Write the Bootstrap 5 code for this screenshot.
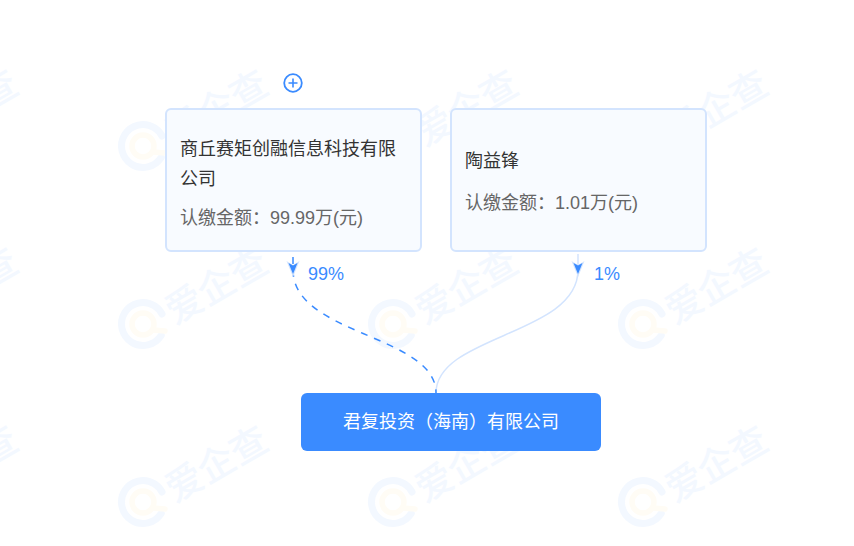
<!DOCTYPE html>
<html lang="zh">
<head>
<meta charset="utf-8">
<link href="https://cdn.jsdelivr.net/npm/bootstrap@5.3.0/dist/css/bootstrap.min.css" rel="stylesheet">
<style>
html,body{height:100%;margin:0;background:#fff;overflow:hidden}
body{font-family:"Liberation Sans","Noto Sans CJK SC",sans-serif}
.canvas-wrap{position:relative;width:854px;height:546px;overflow:hidden}
.wm-layer,.edge-layer{position:absolute;left:0;top:0;width:854px;height:546px}
.wm-word{font-family:"Noto Sans CJK SC",sans-serif;font-size:37px;font-weight:500;fill:#f3f8ff}
.tree{position:relative;padding-top:108px;width:854px}
.holder-row{gap:28px;padding-left:165px}
.holder-box{width:257px;height:144px;background:#f8fbff;border:2px solid #d3e4fe;border-radius:6px;padding:0 13px;color:#333;font-size:18px;line-height:30px}
.holder-long{padding-top:6px}
.holder-long .holder-name{margin-bottom:9px}
.holder-short{padding-top:3px}
.holder-short .holder-name{margin-bottom:12px}
.holder-money{color:#666}
.target-box{width:300px;height:58px;margin:141px 0 0 301px;background:#3a8bff;border-radius:6px;color:#fff;font-size:18px}
.pct{position:absolute;top:264px;color:#3a8bff;font-size:18px;line-height:20px}
.pct-a{left:308px}
.pct-b{left:594px}
.plus-btn{position:absolute;left:283px;top:73px;width:20px;height:20px}
</style>
</head>
<body>
<div class="canvas-wrap">
  <svg class="wm-layer" aria-hidden="true">
    <defs>
      <g id="wm">
        <circle cx="143" cy="146" r="21.5" fill="none" stroke="#f3f8ff" stroke-width="7" stroke-dasharray="112 23" stroke-linecap="round" transform="rotate(32 143 146)"/>
        <circle cx="143" cy="146" r="11" fill="none" stroke="#fffcf5" stroke-width="5.5"/>
        <path d="M153 152l12 1" stroke="#fffcf5" stroke-width="5.5" stroke-linecap="round"/>
        <text class="wm-word" x="175" y="147" transform="rotate(-30 175 147)" textLength="111">爱企查</text>
      </g>
    </defs>
    <use href="#wm" x="-250"/><use href="#wm"/><use href="#wm" x="250"/><use href="#wm" x="500"/>
    <use href="#wm" x="-250" y="178"/><use href="#wm" y="178"/><use href="#wm" x="250" y="178"/><use href="#wm" x="500" y="178"/>
    <use href="#wm" x="-250" y="356"/><use href="#wm" y="356"/><use href="#wm" x="250" y="356"/><use href="#wm" x="500" y="356"/>
  </svg>
  <div class="tree">
    <div class="holder-row d-flex">
      <div class="holder-box holder-long d-flex flex-column justify-content-center">
        <div class="holder-name">商丘赛矩创融信息科技有限公司</div>
        <div class="holder-money">认缴金额&#xFF1A;99.99万(元)</div>
      </div>
      <div class="holder-box holder-short d-flex flex-column justify-content-center">
        <div class="holder-name">陶益锋</div>
        <div class="holder-money">认缴金额&#xFF1A;1.01万(元)</div>
      </div>
    </div>
    <div class="target-box d-flex align-items-center justify-content-center">君复投资&#xFF08;海南&#xFF09;有限公司</div>
  </div>
  <svg class="edge-layer" fill="none" aria-hidden="true">
    <path d="M578 254V270C578 335 436 335 436 393" stroke="#d3e4fe" stroke-width="1.500"/>
    <path d="M293 270C293 335 436 335 436 393" stroke="#3a8bff" stroke-width="1.500" stroke-dasharray="7 7"/>
    <path d="M293 257V264" stroke="#3a8bff" stroke-width="1.500"/>
    <path d="M293 277l-6.500-16 6.500 4 6.500-4z" fill="#d3e4fe"/>
    <path d="M293 274l-4.500-11 4.500 2.500 4.500-2.500z" fill="#3a8bff"/>
    <path d="M578 277l-6.500-16 6.500 4 6.500-4z" fill="#d3e4fe"/>
    <path d="M578 274l-4.500-11 4.500 2.500 4.500-2.500z" fill="#3a8bff"/>
  </svg>
  <div class="pct pct-a">99%</div>
  <div class="pct pct-b">1%</div>
  <svg class="plus-btn" viewBox="0 0 20 20" fill="none" stroke="#3a8bff" aria-label="展开">
    <circle cx="10" cy="10" r="8.800" stroke-width="1.800"/>
    <path d="M5.500 10h9M10 5.500v9" stroke-width="1.600"/>
  </svg>
</div>
<script src="https://cdn.jsdelivr.net/npm/bootstrap@5.3.0/dist/js/bootstrap.bundle.min.js"></script>
</body>
</html>
